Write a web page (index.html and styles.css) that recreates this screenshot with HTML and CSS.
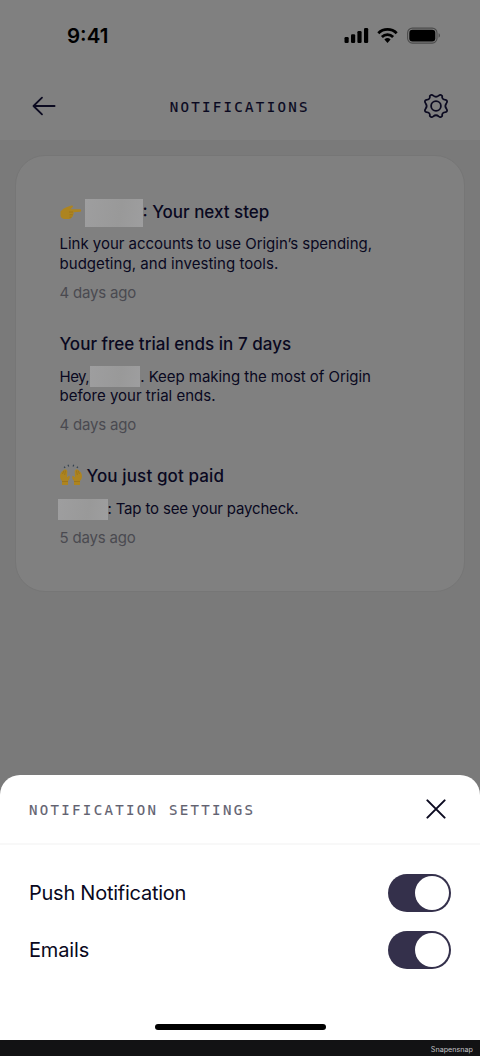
FILE: index.html
```html
<!DOCTYPE html>
<html lang="en">
<head>
<meta charset="utf-8">
<title>Notifications</title>
<link rel="stylesheet" href="styles.css">
</head>
<body>
<div class="screen">
  <header class="top">
    <div class="status">
      <span class="time">9:41</span>
      <svg class="status-icons" width="98" height="18" viewBox="0 0 98 18">
        <rect x="0.5" y="10" width="4.2" height="6" rx="1.2"/>
        <rect x="7" y="7.2" width="4.2" height="8.8" rx="1.2"/>
        <rect x="13.4" y="4" width="4.2" height="12" rx="1.2"/>
        <rect x="20" y="1" width="4.2" height="15" rx="1.2"/>
        <g fill="none" stroke="#000" stroke-width="2.8">
          <path d="M34.3 6.2a13.1 13.1 0 0 1 18.4 0"/>
          <path d="M37.9 10a8 8 0 0 1 11.2 0"/>
        </g>
        <path d="M40.4 12.5a4.6 4.6 0 0 1 6.2 0L43.5 16z"/>
        <rect x="63.6" y="1.1" width="29.4" height="15" rx="4.8" fill="none" stroke="#4b4b4b" stroke-width="1.1"/>
        <rect x="65.3" y="2.8" width="26" height="11.6" rx="3.2"/>
        <path d="M94.6 6.3v4.4c1.9-.7 1.9-3.7 0-4.4z" fill="#4b4b4b"/>
      </svg>
    </div>
    <div class="nav">
      <svg width="24" height="20" viewBox="0 0 24 20" class="line-icon"><path d="M22.6 10H1.5M10 1.6L1.5 10l8.500 8.400"/></svg>
      <h1 class="mono nav-title">NOTIFICATIONS</h1>
      <svg width="26" height="26" viewBox="0 0 26 26" class="line-icon">
        <circle cx="13" cy="13" r="4.900"/>
        <path d="M10.300 2.600Q13 4.900 15.700 2.600Q17.700 1 19.200 3Q18.600 6.600 22.600 6.800Q25.200 7.800 23.400 10.300Q21.300 13 23.400 15.700Q25.200 18.200 22.600 19.200Q18.600 19.400 19.200 23Q17.700 25 15.700 23.400Q13 21.100 10.300 23.400Q8.300 25 6.800 23Q7.400 19.400 3.400 19.200Q.8 18.200 2.600 15.700Q4.700 13 2.600 10.300Q.8 7.800 3.400 6.800Q7.400 6.600 6.800 3Q8.300 1 10.300 2.600Z"/>
      </svg>
    </div>
  </header>

  <main class="feed">
    <section class="card">
      <article class="item">
        <h2 class="title">
          <svg class="point" width="22" height="15" viewBox="0 0 22 15">
            <path d="M.5 6.500Q3 3 7 2L11.500.500Q13.300.300 13 1.800L10.500 4.200L20.500 4.300Q22 5.600 20.500 6.700L13.400 7.200Q14.500 9 13 9.900Q13.300 11.900 11.700 12.300Q11.300 14 9 14H4Q1 13.500.5 11Z" fill="#ad8420"/>
            <path d="M13 7H9M12.700 9.800H9.500M11.500 12.200H9.500" stroke="#8c6716" stroke-width=".5" fill="none"/>
          </svg>
          <span class="redact redact-lg"></span><span class="t1">: Your next step</span>
        </h2>
        <p class="body"><span class="b1">Link your accounts to use Origin’s spending,</span><br><span class="b2">budgeting, and investing tools.</span></p>
        <p class="meta">4 days ago</p>
      </article>
      <article class="item">
        <h2 class="title"><span class="t2">Your free trial ends in 7 days</span></h2>
        <p class="body"><span class="row"><span class="b3">Hey,</span><span class="redact redact-name"></span><span class="b4">. Keep making the most of Origin</span></span><span class="b5">before your trial ends.</span></p>
        <p class="meta">4 days ago</p>
      </article>
      <article class="item">
        <h2 class="title">
          <svg class="hands" width="24" height="22" viewBox="0 0 24 22">
            <path d="M5.500 5.500Q1 8 1 12.500Q1 15 3 17V21H9V17Q11 15.500 10.800 12.800Q10.500 11.500 9.500 12L8 13.500L8.300 7Q7.300 4.700 5.500 5.500Z" fill="#ad8420"/>
            <path d="M18.500 5.500Q23 8 23 12.500Q23 15 21 17V21H15V17Q13 15.500 13.200 12.800Q13.500 11.500 14.500 12L16 13.500L15.700 7Q16.700 4.700 18.500 5.500Z" fill="#ad8420"/>
            <path d="M3.500 10L5 6.500M5.700 11L6.500 6.500M20.500 10L19 6.500M18.300 11L17.500 6.500M3 17.500H9M15 17.500H21" stroke="#8c6716" stroke-width=".5" fill="none"/>
            <path d="M5 2.800L6.200 3.800M9 .8L9.700 2.400M14.800.8L14 2.400M19 2.800L17.800 3.800" stroke="#34424f" stroke-width="1.200"/>
          </svg>
          <span class="t3">You just got paid</span>
        </h2>
        <p class="body"><span class="row"><span class="redact redact-start"></span><span class="b6">: Tap to see your paycheck.</span></span></p>
        <p class="meta">5 days ago</p>
      </article>
    </section>
  </main>

  <section class="sheet">
    <div class="sheet-head">
      <h2 class="mono sheet-title">NOTIFICATION SETTINGS</h2>
      <svg width="20" height="20" viewBox="0 0 20 20" class="close"><path d="M1.400 1.400l17.200 17.200M18.600 1.400L1.400 18.600"/></svg>
    </div>
    <div class="options">
      <div class="option"><span class="l1">Push Notification</span><span class="toggle"><span class="knob"></span></span></div>
      <div class="option"><span class="l2">Emails</span><span class="toggle"><span class="knob"></span></span></div>
    </div>
    <div class="home"></div>
  </section>
  <footer class="credit">Snapensnap</footer>
</div>
</body>
</html>
```
FILE: styles.css
```css
* { box-sizing: border-box; }
body { margin: 0; font-family: Inter, "Liberation Sans", sans-serif; color: #090820; }
h1, h2, p { margin: 0; font-weight: 400; }
svg { display: block; flex: none; }
.screen { width: 480px; height: 1056px; display: flex; flex-direction: column; background: #7a7a7a; overflow: hidden; }

.top { height: 140px; flex: none; background: #808080; }
.status { height: 72px; padding: 0 38px 0 67px; display: flex; align-items: center; justify-content: space-between; }
.time { font-size: 20.5px; font-weight: 600; color: #000; line-height: 24px; }
.nav { height: 68px; padding: 0 31px 0 32px; display: flex; align-items: center; justify-content: space-between; }
.line-icon { fill: none; stroke: #0b0a20; stroke-width: 1.8; stroke-linecap: round; stroke-linejoin: round; }
.mono { font-family: "DejaVu Sans Mono", monospace; font-size: 14.800px; letter-spacing: 2.430px; line-height: 20px; white-space: nowrap; transform: scaleX(.95); }
.nav-title { padding-top: 1px; -webkit-text-stroke: .2px #090820; }

.feed { flex: 1; padding: 15px 15px 0; }
.card { height: 437px; padding: 44px 43.500px; border: 1px solid #767676; border-radius: 30px; background: #808080; }
.item { margin-bottom: 29.500px; white-space: nowrap; }
.title { display: flex; align-items: center; height: 24px; line-height: 24px; font-size: 17px; font-weight: 500; }
.body { margin-top: 10.400px; font-size: 15px; line-height: 19.600px; }
.row { display: flex; align-items: center; height: 19.600px; }
.meta { margin-top: 9.500px; font-size: 15px; line-height: 19.600px; letter-spacing: -.18px; color: #4a4a50; }
.t2 { letter-spacing: .02px; }
.t3 { letter-spacing: .12px; }
.b1 { letter-spacing: -.02px; }
.b2 { letter-spacing: .04px; }
.b3 { letter-spacing: -.5px; }
.b4 { letter-spacing: -.04px; }
.b6 { letter-spacing: -.17px; }
.redact { flex: none; background: linear-gradient(100deg, #9e9e9f, #999999 60%, #9e9e9f); }
.redact-lg { width: 58px; height: 28px; margin: 2px 0 0 3px; }
.redact-name { width: 50px; height: 21px; margin: 1px 0 0 1px; }
.redact-start { width: 50px; height: 21px; margin: 2px 0 0 -2px; }
.hands { margin: -2px 4px 0 -1px; }

.sheet { height: 265px; flex: none; display: flex; flex-direction: column; background: #fff; border-radius: 20px 20px 0 0; }
.sheet-head { height: 70px; padding: 0 34px 0 29px; display: flex; align-items: center; justify-content: space-between; border-bottom: 2px solid #f8f8f8; }
.sheet-title { padding-top: 1px; color: #626270; transform-origin: left; -webkit-text-stroke: .15px #626270; }
.close { fill: none; stroke: #0b0a20; stroke-width: 2; stroke-linecap: round; }
.options { padding: 29px 29px 0; display: flex; flex-direction: column; gap: 19.400px; }
.option { display: flex; align-items: center; justify-content: space-between; height: 38px; font-size: 20px; line-height: 24px; }
.option + .option { height: 37px; }
.l1 { letter-spacing: -.25px; }
.l2 { letter-spacing: -.15px; }
.toggle { display: flex; justify-content: flex-end; align-items: center; width: 63px; height: 38px; padding-right: 2px; border-radius: 19px; background: #34304b; }
.knob { width: 34px; height: 34px; border-radius: 50%; background: #fff; }
.home { width: 171px; height: 6px; margin: auto auto 10px 154.500px; border-radius: 3px; background: #000; }
.credit { height: 16px; flex: none; padding-right: 7px; background: #121214; color: #c4c4c8; font: 7.200px/19px Inter, sans-serif; text-align: right; }
```
